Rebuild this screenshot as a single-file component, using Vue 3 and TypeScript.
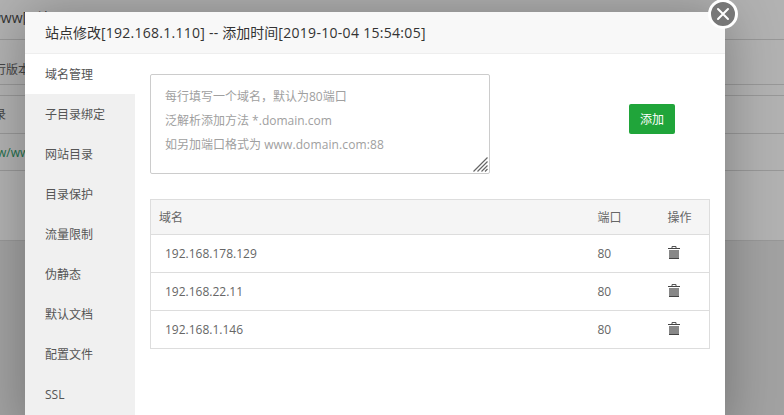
<script setup lang="ts">
const tabs = ['域名管理', '子目录绑定', '网站目录', '目录保护', '流量限制', '伪静态', '默认文档', '配置文件', 'SSL']
const rows = [
  { domain: '192.168.178.129', port: 80 },
  { domain: '192.168.22.11', port: 80 },
  { domain: '192.168.1.146', port: 80 },
]
</script>

<template>
  <div class="page">
    <div class="bg-row bg-top"><span>www网站</span></div>
    <div class="bg-row bg-head"><span>行版本</span></div>
    <div class="bg-row bg-gap"></div>
    <div class="bg-row bg-cell"><span>录</span></div>
    <div class="bg-row bg-link"><span>w/www</span></div>
    <div class="bg-row bg-rest"></div>
    <div class="bg-lower"></div>

    <section class="modal">
      <header class="modal-head">站点修改<span class="wide">[192.168.1.110] -- </span>添加时间<span class="date">[2019-10-04 15:54:05]</span></header>
      <div class="modal-body">
        <nav class="side">
          <div v-for="(t, i) in tabs" :key="t" class="tab" :class="{ active: i === 0 }">{{ t }}</div>
        </nav>
        <main class="content">
          <div class="add-row">
            <div class="area">
              <p>每行填写一个域名，默认为80端口</p>
              <p>泛解析添加方法 *.domain.com</p>
              <p>如另加端口格式为 <span class="host">www.domain.com:88</span></p>
              <svg class="grip" width="15" height="15" viewBox="0 0 15 15">
                <path d="M0.5 14.5L14.5 0.5M4.5 14.5L14.5 4.5M8.5 14.5L14.5 8.5M12 14.5L14.5 12" stroke="#666" stroke-width="1.2" fill="none" />
              </svg>
            </div>
            <button class="add">添加</button>
          </div>
          <table class="grid">
            <thead>
              <tr><th class="c-domain">域名</th><th class="c-port">端口</th><th class="c-op">操作</th></tr>
            </thead>
            <tbody>
              <tr v-for="r in rows" :key="r.domain">
                <td class="cell-domain">{{ r.domain }}</td>
                <td class="c-port">{{ r.port }}</td>
                <td class="c-op">
                  <svg class="trash" width="12" height="13" viewBox="0 0 12 13">
                    <path d="M4 2V.5h4V2" fill="none" stroke="#555" stroke-width="1" />
                    <path d="M0 2.5h12" stroke="#444" stroke-width="1" />
                    <path d="M1 4h10v8H1z" fill="#888" />
                    <path d="M1 12.5h10" stroke="#444" stroke-width="1" />
                  </svg>
                </td>
              </tr>
            </tbody>
          </table>
        </main>
      </div>
    </section>

    <button class="close" aria-label="关闭">
      <svg width="16" height="16" viewBox="0 0 16 16">
        <path d="M3 3L13 13M13 3L3 13" stroke="#fff" stroke-width="2" stroke-linecap="round" />
      </svg>
    </button>
  </div>
</template>

<style>
html, body { margin: 0; overflow: hidden; }
</style>

<style scoped>
.page {
  position: relative;
  width: 784px;
  height: 415px;
  overflow: hidden;
  background: #b2b2b2;
  font-family: "Open Sans", "Noto Sans CJK SC", sans-serif;
  font-size: 12px;
  color: #555;
}
.bg-row { box-sizing: border-box; border-bottom: 1px solid #989898; white-space: nowrap; color: #444; }
.bg-top { height: 40px; padding: 8px 0 0; margin-left: -10px; font-size: 14px; line-height: 20px; color: #333; }
.bg-head { height: 45px; padding-top: 20px; margin-left: -6px; line-height: 20px; }
.bg-gap { height: 11px; }
.bg-cell { height: 38px; line-height: 38px; margin-left: -6px; }
.bg-link { height: 37px; line-height: 38px; margin-left: -3px; color: #1d6e4a; }
.bg-rest { height: 70px; }
.bg-lower { height: 175px; background: #a2a2a2; }

.modal {
  position: absolute;
  left: 25px;
  top: 12px;
  width: 700px;
  height: 420px;
  background: #fff;
  box-shadow: 1px 1px 50px rgba(0, 0, 0, .3);
  display: flex;
  flex-direction: column;
}
.modal-head {
  height: 42px;
  box-sizing: border-box;
  background: #f8f8f8;
  border-bottom: 1px solid #eee;
  padding-left: 20px;
  line-height: 41px;
  font-size: 14px;
  color: #333;
  white-space: pre;
}
.wide { letter-spacing: .25px; }
.date { letter-spacing: .3px; }
.modal-body { display: flex; flex: 1; }
.side { width: 110px; background: #f0f0f0; }
.tab {
  height: 40px;
  line-height: 42px;
  padding-left: 20px;
  color: #555;
}
.tab.active { background: #fff; }
.content { flex: 1; padding: 20px 15px 0; }
.add-row { display: flex; align-items: flex-start; height: 100px; }
.area {
  position: relative;
  width: 340px;
  height: 100px;
  box-sizing: border-box;
  border: 1px solid #ccc;
  border-radius: 2px;
  padding: 10px 14px;
  color: #a0a0a0;
  line-height: 24px;
}
.area p { margin: 0; }
.host { letter-spacing: .12px; }
.grip { position: absolute; right: 1px; bottom: 1px; }
.add {
  margin: 30px 0 0 139px;
  width: 46px;
  height: 30px;
  border: 0;
  border-radius: 2px;
  background: #20a53a;
  color: #fff;
  font: inherit;
  padding: 0;
}
.grid {
  margin-top: 25px;
  width: 560px;
  border-collapse: collapse;
  table-layout: fixed;
  border: 1px solid #ddd;
}
.grid th {
  height: 35px;
  padding: 0;
  background: #f5f5f5;
  border-bottom: 1px solid #ddd;
  font-weight: 400;
  text-align: left;
  color: #666;
  box-sizing: border-box;
}
.grid td {
  height: 38px;
  box-sizing: border-box;
  padding: 0;
  border-bottom: 1px solid #ddd;
  color: #666;
}
.grid .c-domain { padding-left: 8px; }
.grid .cell-domain { padding-left: 14px; }
.c-port { width: 70px; }
.c-op { width: 42px; }
.trash { display: block; margin-top: -2px; }
.close {
  position: absolute;
  left: 708px;
  top: -1px;
  width: 30px;
  height: 30px;
  box-sizing: border-box;
  padding: 0;
  border: 3px solid #fff;
  border-radius: 50%;
  background: #777;
  display: flex;
  align-items: center;
  justify-content: center;
}
</style>
